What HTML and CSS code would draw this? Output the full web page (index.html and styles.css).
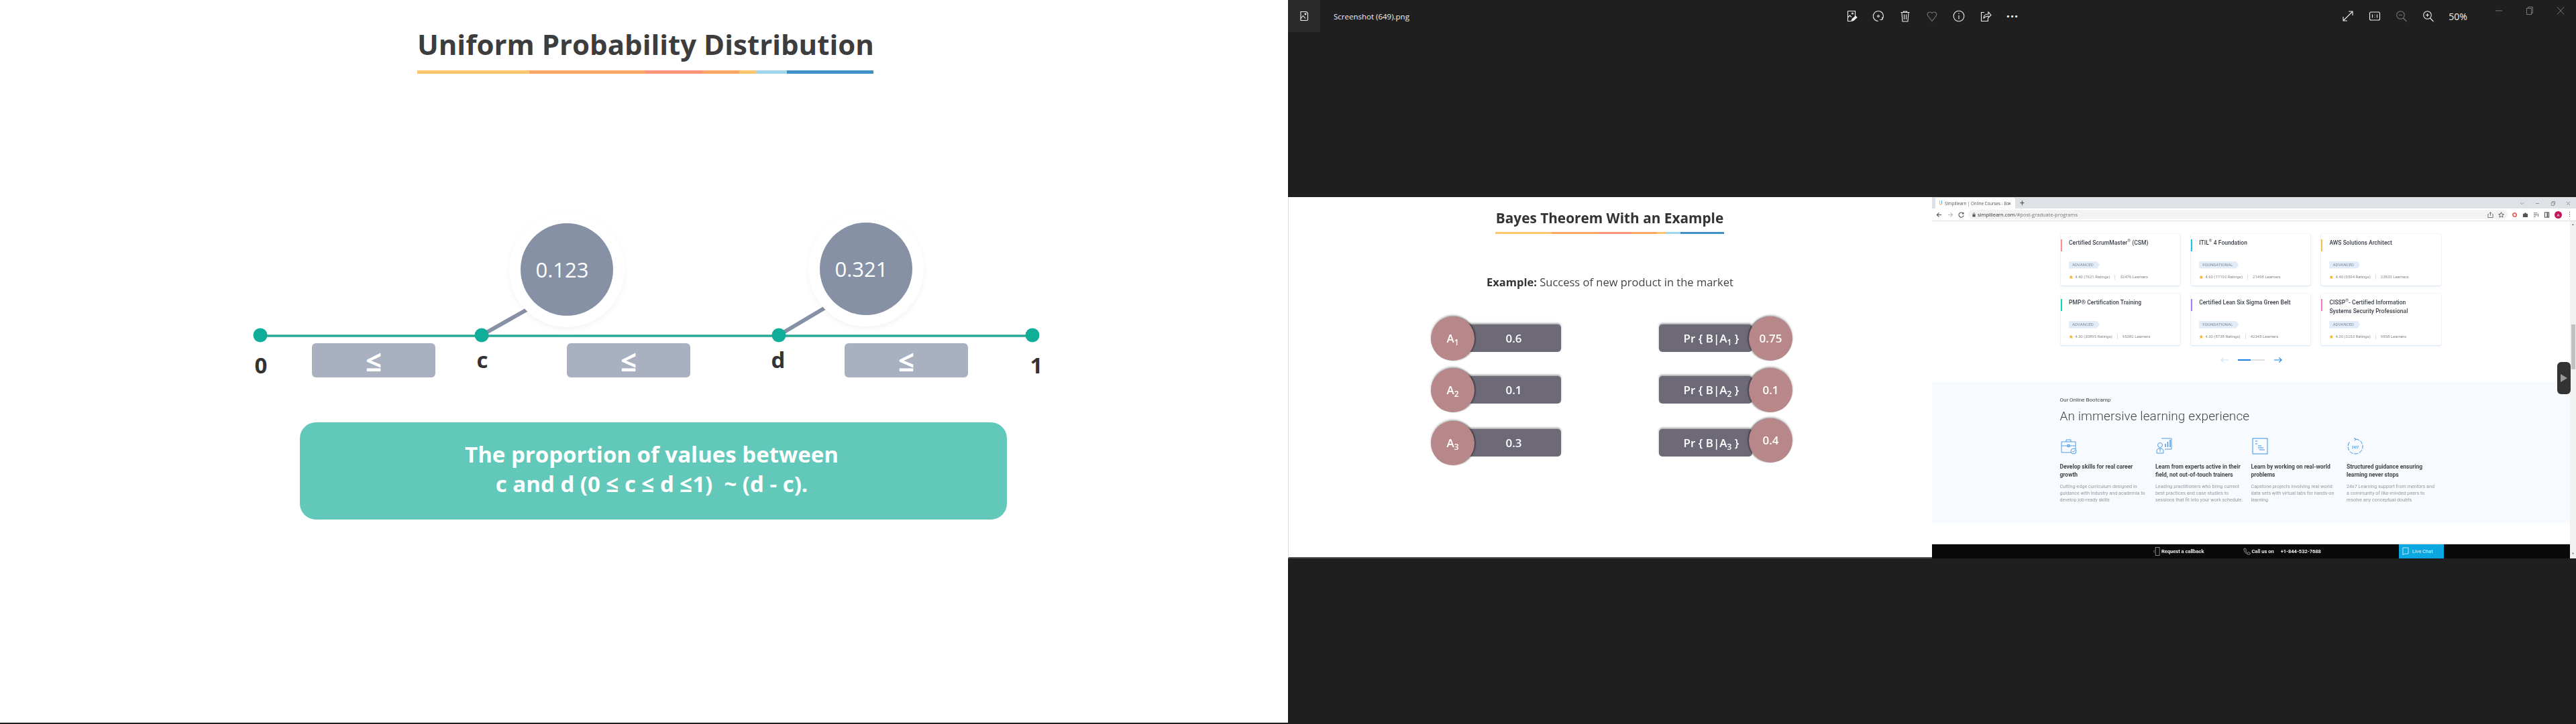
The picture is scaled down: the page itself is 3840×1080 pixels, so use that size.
FILE: index.html
```html
<!DOCTYPE html>
<html lang="en">
<head>
<meta charset="utf-8">
<title>Uniform Probability Distribution</title>
<link rel="stylesheet" href="styles.css">
</head>
<body>
<main class="desktop">
  <section class="main-slide">
    <div class="title-block">
      <h1 class="main-title">Uniform Probability Distribution</h1>
      <div class="rule rule-large"><i class="c1 w1"></i><i class="c2 w2"></i><i class="c3 w3"></i><i class="c2 w4"></i><i class="c1 w5"></i><i class="c4 w6"></i><i class="c5 w7"></i></div>
    </div>
    <div class="diagram">
      <svg class="diagram-art" viewBox="0 0 1920 520" width="1920" height="520" aria-hidden="true">
        <line x1="388" y1="391" x2="1539" y2="391" stroke="#2aa898" stroke-width="3.5"/>
        <line x1="718" y1="390" x2="787" y2="351" stroke="#8791a6" stroke-width="6"/>
        <line x1="1161" y1="390" x2="1230" y2="349" stroke="#8791a6" stroke-width="6"/>
        <circle cx="388" cy="390" r="10.5" fill="#10ae98"/>
        <circle cx="718" cy="390" r="10.5" fill="#10ae98"/>
        <circle cx="1161" cy="390" r="10.5" fill="#10ae98"/>
        <circle cx="1539" cy="390" r="10.5" fill="#10ae98"/>
      </svg>
      <div class="bubble bubble-c"><span>0.123</span></div>
      <div class="bubble bubble-d"><span>0.321</span></div>
      <div class="le-box box-a">≤</div>
      <div class="le-box box-b">≤</div>
      <div class="le-box box-c">≤</div>
      <span class="tick tick-0">0</span>
      <span class="tick tick-c">c</span>
      <span class="tick tick-d">d</span>
      <span class="tick tick-1">1</span>
    </div>
    <div class="proportion">The proportion of values between<br>c and d (0 ≤ c ≤ d ≤1)&nbsp; ~ (d - c).</div>
  </section>

  <section class="viewer">
    <header class="viewer-bar">
      <div class="viewer-tab">
        <svg viewBox="0 0 18 18" width="18" height="18" fill="none" stroke="#f0f0f0" stroke-width="1.1"><path d="M4 2.5h8.500l2 2v9.500a1.500 1.500 0 0 1-1.500 1.500H4z"/><path d="M4 12.500l3.500-4 3.500 4M4 15.500h9"/><circle cx="11" cy="6" r=".9"/></svg>
      </div>
      <span class="file-name">Screenshot (649).png</span>
      <div class="tool-group tools-main">
        <span class="tool"><svg viewBox="0 0 18 18" width="18" height="18" fill="none" stroke="#eee" stroke-width="1.100"><path d="M3.500 1.500h11v8M3.500 1.500v15h5"/><path d="M3.500 11l3-3 2.500 2.500"/><circle cx="10.500" cy="5" r="1"/><path d="M9 16.500l1-3 5-4.500 2 2-5 4.500z" fill="#eee"/></svg></span>
        <span class="tool"><svg viewBox="0 0 18 18" width="18" height="18" fill="none" stroke="#eee" stroke-width="1.100"><path d="M9 16.500A7.500 7.500 0 1 1 14.500 14M14.800 10.500v4h-3.500"/><circle cx="9" cy="9" r="1.300"/></svg></span>
        <span class="tool"><svg viewBox="0 0 18 18" width="18" height="18" fill="none" stroke="#eee" stroke-width="1.100"><path d="M2.500 3.500h13M6.500 3.500V2h5v1.500M4 3.500l1 13.500h8l1-13.500M7.500 6.500V14M10.500 6.500V14"/></svg></span>
        <span class="tool tool-dim"><svg viewBox="0 0 18 18" width="18" height="18" fill="none" stroke="#777" stroke-width="1.100"><path d="M9 16.500L2.800 8.500C.8 5 4.800 .8 9 4.500c4.200-3.700 8.200.5 6.200 4z"/></svg></span>
        <span class="tool"><svg viewBox="0 0 18 18" width="18" height="18" fill="none" stroke="#eee" stroke-width="1.100"><circle cx="9" cy="9" r="7.800"/><path d="M9 8v5.500M9 4.500v1.500"/></svg></span>
        <span class="tool"><svg viewBox="0 0 18 18" width="18" height="18" fill="none" stroke="#eee" stroke-width="1.100"><path d="M7 3.500H2.500v13h10V12"/><path d="M6 12c0-4 3-6 7-6V3l4 4.500-4 4V9c-3 0-5 1-7 3z"/></svg></span>
        <span class="tool tool-more">···</span>
      </div>
      <div class="tool-group tools-zoom">
        <span class="tool"><svg viewBox="0 0 18 18" width="18" height="18" fill="none" stroke="#eee" stroke-width="1.100"><path d="M2 16L16 2M10 2h6v6M2 10v6h6"/></svg></span>
        <span class="tool"><svg viewBox="0 0 18 18" width="18" height="18" fill="none" stroke="#eee" stroke-width="1.100"><rect x="1.500" y="3" width="15" height="12" rx="2"/><path d="M5.500 6.500v5M12.500 6.500v5M9 7v.8M9 10.200v.8"/></svg></span>
        <span class="tool"><svg viewBox="0 0 18 18" width="18" height="18" fill="none" stroke="#777" stroke-width="1.100"><circle cx="7.500" cy="7.500" r="5.800"/><path d="M5 7.500h5M11.500 12l5 5"/></svg></span>
        <span class="tool"><svg viewBox="0 0 18 18" width="18" height="18" fill="none" stroke="#eee" stroke-width="1.100"><circle cx="7.500" cy="7.500" r="5.800"/><path d="M5 7.500h5M7.500 5v5M11.500 12l5 5"/></svg></span>
      </div>
      <span class="zoom-level">50%</span>
      <div class="win-controls">
        <span class="win-btn"><svg viewBox="0 0 12 12" width="12" height="12" stroke="#777" fill="none"><path d="M1 6h10"/></svg></span>
        <span class="win-btn"><svg viewBox="0 0 12 12" width="12" height="12" stroke="#777" fill="none"><rect x="1.500" y="2.500" width="7" height="9"/><path d="M3.500 2.500V.5h7v9h-2"/></svg></span>
        <span class="win-btn"><svg viewBox="0 0 12 12" width="12" height="12" stroke="#777" fill="none"><path d="M1 .5l10 11M11 .5L1 11.500"/></svg></span>
      </div>
    </header>

    <div class="slides">
      <article class="bayes">
        <div class="bayes-head">
          <h2 class="bayes-title">Bayes Theorem With an Example</h2>
          <div class="rule rule-small"><i class="c1 s1"></i><i class="c2 s2"></i><i class="c3 s3"></i><i class="c2 s4"></i><i class="c1 s5"></i><i class="c4 s6"></i><i class="c5 s7"></i></div>
        </div>
        <p class="bayes-example"><b>Example:</b> Success of new product in the market</p>
        <div class="bayes-grid">
          <div class="bayes-col col-left">
            <div class="b-row"><span class="b-dot"><span>A<sub>1</sub></span></span><span class="b-bar">0.6</span></div>
            <div class="b-row"><span class="b-dot"><span>A<sub>2</sub></span></span><span class="b-bar">0.1</span></div>
            <div class="b-row row-lower"><span class="b-dot"><span>A<sub>3</sub></span></span><span class="b-bar">0.3</span></div>
          </div>
          <div class="bayes-col col-right">
            <div class="b-row"><span class="b-bar"><span>Pr { B|A<sub>1</sub> }</span></span><span class="b-dot">0.75</span></div>
            <div class="b-row"><span class="b-bar"><span>Pr { B|A<sub>2</sub> }</span></span><span class="b-dot">0.1</span></div>
            <div class="b-row row-raised"><span class="b-bar"><span>Pr { B|A<sub>3</sub> }</span></span><span class="b-dot dot-high">0.4</span></div>
          </div>
        </div>
      </article>

      <article class="browser">
        <div class="tab-strip">
          <div class="b-tab">
            <svg viewBox="0 0 8 12" width="6" height="10" fill="none" stroke-width="1.300"><path d="M2 1v6" stroke="#f5b642"/><path d="M6 1v6" stroke="#3fb0e8"/><path d="M2 7c0 3 4 3 4 0" stroke="#f08c3c"/></svg>
            <span class="b-tab-text">Simplilearn | Online Courses - Bo</span>
            <span class="b-tab-x">✕</span>
          </div>
          <span class="b-plus">+</span>
          <div class="b-win">
            <svg viewBox="0 0 8 8" width="7" height="7" fill="none" stroke="#888"><path d="M1 2.500l3 3 3-3"/></svg>
            <svg viewBox="0 0 8 8" width="7" height="7" fill="none" stroke="#888"><path d="M1 4h6"/></svg>
            <svg viewBox="0 0 8 8" width="7" height="7" fill="none" stroke="#888"><path d="M1.500 2.500h4.500v5h-4.500zM3 2.500v-2h4.500v5h-1.500"/></svg>
            <svg viewBox="0 0 8 8" width="7" height="7" fill="none" stroke="#888"><path d="M1 1l6 6M7 1L1 7"/></svg>
          </div>
        </div>
        <div class="url-row">
          <div class="nav-btns">
            <svg viewBox="0 0 10 10" width="9" height="9" fill="none" stroke="#555" stroke-width="1.200"><path d="M9 5H1.500M5 1.500L1.500 5 5 8.500"/></svg>
            <svg viewBox="0 0 10 10" width="9" height="9" fill="none" stroke="#bbb" stroke-width="1.200"><path d="M1 5h7.500M5 1.500L8.500 5 5 8.500"/></svg>
            <svg viewBox="0 0 10 10" width="9" height="9" fill="none" stroke="#555" stroke-width="1.200"><path d="M8.500 3A4 4 0 1 0 9 6M8.800 .8V3.300H6.300"/></svg>
          </div>
          <div class="url-bar">
            <svg class="url-lock" viewBox="0 0 6 8" width="5" height="7" fill="#555"><rect x=".5" y="3" width="5" height="4.500"/><path d="M1.500 3V2a1.500 1.500 0 0 1 3 0v1" fill="none" stroke="#555" stroke-width=".8"/></svg>
            <span class="url-text"><b>simplilearn.com</b>/#post-graduate-programs</span>
            <svg class="url-share" viewBox="0 0 10 10" width="9" height="9" fill="none" stroke="#666"><path d="M2 4H1v5.500h8V4H8M5 6.500V.8M3 2.500L5 .8l2 1.700"/></svg>
            <svg class="url-star" viewBox="0 0 10 10" width="9" height="9" fill="none" stroke="#555"><path d="M5 .8l1.300 2.900 3.100.3-2.400 2 .8 3L5 7.400 2.200 9l.8-3-2.400-2 3.100-.3z"/></svg>
          </div>
          <div class="ext-icons">
            <svg viewBox="0 0 10 10" width="9" height="9" fill="none" stroke="#e8594f" stroke-width="1.800"><circle cx="5" cy="5" r="3"/></svg>
            <svg viewBox="0 0 10 10" width="9" height="9" fill="#555"><path d="M1 3h2.500a1.500 1.500 0 0 1 3 0H9v6H1z"/></svg>
            <svg viewBox="0 0 10 10" width="9" height="9" fill="none" stroke="#555"><path d="M1 2h6M1 5h6M1 8h3M8.500 3v5"/></svg>
            <svg viewBox="0 0 10 10" width="9" height="9" fill="none" stroke="#555" stroke-width="1.200"><rect x="1.500" y="1" width="7" height="8"/><path d="M6 1v8" stroke-width="2"/></svg>
            <span class="avatar">A</span>
            <span class="kebab">⋮</span>
          </div>
        </div>
        <div class="page">
          <div class="page-content">
            <div class="cards">
              <div class="card"><span class="accent a-red"></span><h3>Certified ScrumMaster<sup>®</sup> (CSM)</h3><div class="card-low"><span class="tag">ADVANCED</span><p class="meta"><svg class="star" viewBox="0 0 10 10"><path d="M5 .5l1.400 3 3.200.3-2.400 2.100.8 3.300L5 7.500 2 9.200l.8-3.300L.4 3.800l3.200-.3z"/></svg>4.40 (7621 Ratings)<span class="sep"></span>32476 Learners</p></div></div>
              <div class="card"><span class="accent a-cyan"></span><h3>ITIL<sup>®</sup> 4 Foundation</h3><div class="card-low"><span class="tag">FOUNDATIONAL</span><p class="meta"><svg class="star" viewBox="0 0 10 10"><path d="M5 .5l1.400 3 3.200.3-2.400 2.100.8 3.300L5 7.500 2 9.200l.8-3.300L.4 3.800l3.200-.3z"/></svg>4.60 (17192 Ratings)<span class="sep"></span>21498 Learners</p></div></div>
              <div class="card"><span class="accent a-amber"></span><h3>AWS Solutions Architect</h3><div class="card-low"><span class="tag">ADVANCED</span><p class="meta"><svg class="star" viewBox="0 0 10 10"><path d="M5 .5l1.400 3 3.200.3-2.400 2.100.8 3.300L5 7.500 2 9.200l.8-3.300L.4 3.800l3.200-.3z"/></svg>4.40 (5594 Ratings)<span class="sep"></span>23833 Learners</p></div></div>
              <div class="card"><span class="accent a-teal"></span><h3>PMP® Certification Training</h3><div class="card-low"><span class="tag">ADVANCED</span><p class="meta"><svg class="star" viewBox="0 0 10 10"><path d="M5 .5l1.400 3 3.200.3-2.400 2.100.8 3.300L5 7.500 2 9.200l.8-3.300L.4 3.800l3.200-.3z"/></svg>4.30 (30895 Ratings)<span class="sep"></span>95382 Learners</p></div></div>
              <div class="card"><span class="accent a-violet"></span><h3>Certified Lean Six Sigma Green Belt</h3><div class="card-low"><span class="tag">FOUNDATIONAL</span><p class="meta"><svg class="star" viewBox="0 0 10 10"><path d="M5 .5l1.400 3 3.200.3-2.400 2.100.8 3.300L5 7.500 2 9.200l.8-3.300L.4 3.800l3.200-.3z"/></svg>4.30 (8738 Ratings)<span class="sep"></span>42345 Learners</p></div></div>
              <div class="card"><span class="accent a-pink"></span><h3>CISSP<sup>®</sup>- Certified Information<br>Systems Security Professional</h3><div class="card-low"><span class="tag">ADVANCED</span><p class="meta"><svg class="star" viewBox="0 0 10 10"><path d="M5 .5l1.400 3 3.200.3-2.400 2.100.8 3.300L5 7.500 2 9.200l.8-3.300L.4 3.800l3.200-.3z"/></svg>4.30 (3253 Ratings)<span class="sep"></span>9858 Learners</p></div></div>
            </div>
            <div class="pager">
              <svg viewBox="0 0 14 10" width="13" height="10" fill="none" stroke="#cfe0f2" stroke-width="1.200"><path d="M13 5H1.500M5 1L1 5l4 4"/></svg>
              <span class="pager-track"><i></i></span>
              <svg viewBox="0 0 14 10" width="13" height="10" fill="none" stroke="#1c7fe6" stroke-width="1.200"><path d="M1 5h11.500M9 1l4 4-4 4"/></svg>
            </div>
            <div class="bootcamp">
              <p class="eyebrow">Our Online Bootcamp</p>
              <h3 class="boot-title">An immersive learning experience</h3>
              <div class="features">
                <div class="feature">
                  <svg class="f-icon" viewBox="0 0 24 25" width="24" height="25" fill="none" stroke="#3d93e4" stroke-width=".9"><path d="M1 6h21v16H1zM1 12h21M8 6V3h7v3"/><rect x="10" y="10.500" width="3" height="3"/><circle cx="19" cy="20" r="4" fill="#f7faff"/><path d="M17 20l1.500 1.500 2.500-3"/></svg>
                  <h4>Develop skills for real career growth</h4>
                  <p>Cutting-edge curriculum designed in guidance with industry and academia to develop job-ready skills</p>
                </div>
                <div class="feature">
                  <svg class="f-icon" viewBox="0 0 24 25" width="24" height="25" fill="none" stroke="#3d93e4" stroke-width=".9"><path d="M8 1h15v16H13"/><path d="M14 14V9M17.500 14V6M21 14V3" stroke-width="1.400"/><circle cx="6" cy="11" r="3.500"/><path d="M1 23v-3c0-3 2-4 5-4s5 1 5 4v3z"/><path d="M6 16v5"/></svg>
                  <h4>Learn from experts active in their field, not out-of-touch trainers</h4>
                  <p>Leading practitioners who bring current best practices and case studies to sessions that fit into your work schedule.</p>
                </div>
                <div class="feature">
                  <svg class="f-icon" viewBox="0 0 24 25" width="24" height="25" fill="none" stroke="#3d93e4" stroke-width="1"><rect x="1" y="1" width="22" height="23"/><path d="M5 5h3M5 9h3M9 12h5M9 15h8M11 18h8"/></svg>
                  <h4>Learn by working on real-world problems</h4>
                  <p>Capstone projects involving real world data sets with virtual labs for hands-on learning</p>
                </div>
                <div class="feature">
                  <svg class="f-icon" viewBox="0 0 24 25" width="24" height="25" fill="none" stroke="#3d93e4" stroke-width="1"><path d="M12 2a11 11 0 1 1-8 3.500" stroke-dasharray="6 1.500"/><path d="M10 .5l3 1.500-2 2.500"/><text x="12" y="15.500" text-anchor="middle" class="clock-text">24/7</text></svg>
                  <h4>Structured guidance ensuring learning never stops</h4>
                  <p>24x7 Learning support from mentors and a community of like-minded peers to resolve any conceptual doubts</p>
                </div>
              </div>
            </div>
            <div class="page-gap"></div>
            <footer class="callbar">
              <span class="call-item call-request">
                <svg viewBox="0 0 11 14" width="10" height="13" fill="none" stroke="#ccc" stroke-width=".7"><rect x="3.500" y=".5" width="6.500" height="13"/><path d="M2 5L.5 7 2 9"/></svg>
                Request a callback
              </span>
              <span class="call-item call-phone">
                <svg viewBox="0 0 12 12" width="11" height="11" fill="none" stroke="#ccc" stroke-width=".8"><path d="M1 2l2-1 2 3-1 1.500c.5 1.500 1.500 2.500 3 3L8.500 7l3 2-1 2C5 11 1 7 1 2z"/></svg>
                Call us on <em>+1-844-532-7688</em>
              </span>
              <span class="live-chat">
                <svg viewBox="0 0 11 14" width="10" height="13" fill="none" stroke="#cdeefb"><path d="M1 1h9v10H3l-2 2z"/></svg>
                Live Chat
              </span>
            </footer>
          </div>
          <div class="scrollbar">
            <span class="sb-arrow">▲</span>
            <span class="sb-thumb"></span>
            <span class="sb-arrow">▼</span>
          </div>
          <div class="side-handle"><span class="play"></span></div>
        </div>
      </article>
    </div>
  </section>
</main>
</body>
</html>
```

FILE: styles.css
```css
* { box-sizing: border-box; }
html, body { margin: 0; padding: 0; }
body { width: 3840px; height: 1080px; overflow: hidden; background: #1f1f1f; font-family: "Open Sans", sans-serif; }
h1, h2, h3, h4, p { margin: 0; }
.desktop { display: grid; grid-template-columns: 1920px 1920px; height: 1080px; }

/* Left slide */
.main-slide { background: #fff; height: 1078px; display: flex; flex-direction: column; }
.title-block { width: 680px; margin-left: 622px; padding-top: 37px; }
.main-title { font-size: 42px; line-height: 57px; font-weight: 700; color: #3d3d3d; white-space: nowrap; text-align: center; }
.rule { display: flex; }
.rule i { display: block; height: 100%; }
.rule-large { height: 5px; margin-top: 11px; }
.c1 { background: #ffc56e; } .c2 { background: #ffa566; } .c3 { background: #ff9478; } .c4 { background: #9ed8ee; } .c5 { background: #4090c8; }
.w1 { width: 167px; } .w2 { width: 173px; } .w3 { width: 85px; } .w4 { width: 55px; } .w5 { width: 26px; } .w6 { width: 45px; } .w7 { width: 129px; }

.diagram { position: relative; height: 520px; width: 1920px; }
.diagram-art { position: absolute; left: 0; top: 0; }
.bubble { position: absolute; width: 138px; height: 138px; border-radius: 50%; background: #8791a6; color: #fff; font-size: 31px; font-weight: 400;
  display: flex; align-items: center; justify-content: center; box-shadow: 0 0 0 17px #fff, 0 3px 8px 17px rgba(0,0,0,.05); }
.bubble span { margin-right: 14px; }
.bubble-c { left: 776px; top: 223px; }
.bubble-d { left: 1222px; top: 222px; }
.le-box { position: absolute; top: 402px; width: 184px; height: 51px; border-radius: 6px; background: #a9b1c1; color: #fff; font-size: 42px; font-weight: 700; line-height: 51px; text-align: center; }
.box-a { left: 465px; } .box-b { left: 845px; } .box-c { left: 1259px; }
.tick { position: absolute; font-size: 33px; line-height: 40px; font-weight: 700; color: #333; width: 40px; text-align: center; }
.tick-0 { left: 369px; top: 415px; } .tick-c { left: 699px; top: 407px; } .tick-d { left: 1140px; top: 407px; } .tick-1 { left: 1525px; top: 415px; }
.proportion { width: 1054px; height: 145px; margin-left: 447px; border-radius: 24px; background: #62c8b9; color: #fff; font-size: 33px; line-height: 44px; font-weight: 700; text-align: center; padding: 26px 5px 0 0; }

/* Viewer */
.viewer { height: 1080px; display: flex; flex-direction: column; background: #1f1f1f; }
.viewer-bar { height: 48px; display: flex; align-items: center; color: #f0f0f0; }
.viewer-tab { width: 48px; height: 48px; background: #2b2b2b; display: flex; align-items: center; justify-content: center; }
.file-name { width: 772px; padding-left: 20px; font-size: 11.500px; font-family: "Open Sans", sans-serif; white-space: nowrap; }
.tool-group { display: flex; }
.tool { width: 40px; height: 48px; display: flex; align-items: center; justify-content: center; }
.tool-more { font-size: 18px; font-weight: 700; letter-spacing: 1px; }
.tools-zoom { margin-left: 460px; }
.zoom-level { width: 48px; text-align: center; font-size: 14px; }
.win-controls { display: flex; margin-left: 14px; align-self: flex-start; }
.win-btn { width: 46px; height: 32px; display: flex; align-items: center; justify-content: center; }

.slides { margin-top: 246px; height: 539px; display: grid; grid-template-columns: 960px 960px; filter: blur(.3px); }

/* Bayes slide */
.bayes { background: #fff; border-bottom: 2px solid #555; border-left: 1px solid #ddd; }
.bayes-head { width: 341px; margin-left: 308px; padding-top: 17px; }
.bayes-title { font-size: 20.800px; line-height: 28px; font-weight: 700; color: #333; white-space: nowrap; text-align: center; }
.rule-small { height: 3px; margin-top: 7px; }
.s1 { width: 84px; } .s2 { width: 70px; } .s3 { width: 48px; } .s4 { width: 39px; } .s5 { width: 13px; } .s6 { width: 22px; } .s7 { width: 65px; }
.bayes-example { margin-top: 59px; text-align: center; font-size: 16.500px; line-height: 26px; color: #444; margin-left: 0; width: 958px; }
.bayes-example b { color: #333; }
.bayes-grid { display: flex; margin-top: 38px; padding-left: 212px; gap: 146px; }
.bayes-col { display: flex; flex-direction: column; gap: 11.500px; width: 194px; }
.b-row { display: flex; align-items: center; height: 65.500px; color: #fff; font-weight: 600; font-size: 17px; }
.row-lower { margin-top: 2px; }
.b-dot { width: 65px; height: 65.500px; border-radius: 50%; background: #b78789; flex: none; display: flex; align-items: center; justify-content: center; position: relative; z-index: 1; box-shadow: 0 -2px 3px rgba(0,0,0,.28); }
.col-left .b-dot { box-shadow: 0 -2px 3px rgba(0,0,0,.28), 2px 0 2px rgba(0,0,0,.3); }
.col-right .b-dot { box-shadow: 0 -2px 3px rgba(0,0,0,.28), -2px 0 2px rgba(0,0,0,.3); }
.b-bar { height: 41px; background: #6d6976; flex: 1; display: flex; align-items: center; justify-content: center; border-radius: 5px; box-shadow: 0 -2px 3px rgba(0,0,0,.35); white-space: nowrap; }
.b-dot sub, .b-bar sub { font-size: 12px; line-height: 0; vertical-align: -4px; }
.col-left .b-bar { margin-left: -28px; padding-left: 16px; }
.col-right .b-bar { margin-right: -5px; padding: 0 5px 0 22px; }
.col-right .b-row { width: 199px; }
.row-raised .dot-high { transform: translateY(-2px); }
.row-raised .b-bar { transform: translateY(2px); }

/* Browser shot */
.browser { display: flex; flex-direction: column; background: #fff; font-family: Roboto, sans-serif; overflow: hidden; }
.tab-strip { height: 17px; background: #dee1e6; display: flex; align-items: flex-end; }
.b-tab { width: 119px; height: 16px; margin-left: 5px; background: #fff; border-radius: 4px 4px 0 0; display: flex; align-items: center; padding-left: 5px; gap: 3px; }
.b-tab-text { width: 91px; font-size: 6.200px; color: #555; white-space: nowrap; font-family: "Open Sans", sans-serif; }
.b-tab-x { font-size: 6px; color: #444; }
.b-plus { font-size: 12px; color: #555; margin-left: 7px; line-height: 16px; height: 16px; }
.b-win { margin-left: auto; display: flex; gap: 16px; height: 16px; padding-right: 8px; align-items: center; }
.url-row { height: 19px; display: flex; align-items: center; border-bottom: 1px solid #dcdcdc; }
.nav-btns { display: flex; gap: 7.500px; width: 54px; padding-left: 6px; flex: none; }
.url-bar { width: 804px; height: 14px; background: #f1f3f4; border-radius: 7px; display: flex; align-items: center; padding-left: 6px; }
.url-lock { flex: none; }
.url-text { font-size: 7.500px; color: #777; margin-left: 3px; font-family: "Open Sans", sans-serif; white-space: nowrap; }
.url-text b { font-weight: 400; color: #333; }
.url-share { margin-left: auto; margin-right: 7px; }
.url-star { margin-right: 5px; }
.ext-icons { display: flex; align-items: center; gap: 7px; padding-left: 6px; }
.avatar { width: 11px; height: 11px; border-radius: 50%; background: #c2185b; color: #fff; font-size: 6px; text-align: center; line-height: 11px; }
.kebab { font-size: 9px; color: #444; line-height: 1; }

.page { flex: 1; min-height: 0; display: flex; position: relative; }
.page-content { width: 951px; display: flex; flex-direction: column; }
.cards { display: grid; grid-template-columns: repeat(3, 178.700px); grid-auto-rows: 77px; column-gap: 15.500px; row-gap: 12.300px; margin: 19px 0 0 191.500px; }
.card { position: relative; background: #fff; border-radius: 2px; box-shadow: 0 0 2px rgba(120,170,230,.35), 0 1px 2px rgba(120,170,230,.25); padding: 7px 8px 0 12.500px; display: flex; flex-direction: column; }
.accent { position: absolute; left: 0; top: 8px; width: 2.500px; height: 18px; }
.a-red { background: #ff8f8f; } .a-cyan { background: #14c8e6; } .a-amber { background: #f4c04e; } .a-teal { background: #10d8bc; } .a-violet { background: #a97ff0; } .a-pink { background: #ec7ccc; }
.card h3 { font-size: 8.500px; line-height: 13px; font-weight: 500; color: #3a3f4a; height: 26px; letter-spacing: .04px; white-space: nowrap; }
.card h3 sup { font-size: 6px; line-height: 0; font-weight: 400; }
.card-low { margin-top: 7.500px; }
.tag { display: block; width: fit-content; height: 11px; background: #e2ecf8; color: #7f8b9c; font-size: 6.200px; line-height: 11px; padding: 0 9px 0 5px; clip-path: polygon(0 0, calc(100% - 4px) 0, 100% 50%, calc(100% - 4px) 100%, 0 100%); }
.meta { display: flex; align-items: center; font-size: 6px; line-height: 8px; color: #888; margin-top: 8.500px; white-space: nowrap; }
.star { width: 6.500px; height: 6.500px; fill: #f7b334; margin-right: 2.500px; }
.sep { display: block; width: 1px; height: 7px; background: #ddd; margin: 0 7px; }
.pager { display: flex; align-items: center; margin: 14.500px 0 0 430px; height: 14px; }
.pager-track { display: block; width: 40px; height: 2.500px; background: #dfdfdf; margin: 0 13px; }
.pager-track i { display: block; width: 19px; height: 100%; background: #1c7fe6; }
.bootcamp { height: 211px; margin-top: 25.500px; background: #f7faff; padding: 23px 0 0 190.500px; }
.eyebrow { font-size: 8px; line-height: 10px; color: #444; }
.boot-title { font-size: 19px; line-height: 26px; font-weight: 300; color: #444; margin-top: 6px; letter-spacing: .1px; }
.features { display: grid; grid-template-columns: repeat(4, 142.500px); margin-top: 19px; }
.feature { padding-right: 8px; }
.f-icon { display: block; margin-left: 1px; }
.feature h4 { font-size: 8.500px; line-height: 12px; font-weight: 700; color: #444; margin-top: 12px; height: 24px; }
.feature p { font-size: 7.200px; line-height: 10px; color: #999; margin-top: 6.500px; }
.clock-text { font-size: 5px; font-weight: 700; fill: #3d93e4; stroke: none; }
.page-gap { height: 31px; }
.callbar { height: 21.500px; background: #0a0a0a; border-top: 1px solid #ddd; display: flex; align-items: center; color: #eee; font-size: 7.500px; font-weight: 700; position: relative; padding-left: 330px; }
.call-item { display: inline-flex; align-items: center; gap: 2px; white-space: nowrap; }
.call-phone { margin-left: 58px; }
.call-phone em { font-style: normal; margin-left: 8px; }
.live-chat { position: absolute; left: 696px; top: 0; width: 66.500px; height: 21px; background: #0aa7e0; color: #dff4fc; font-weight: 400; display: flex; align-items: center; gap: 5px; padding-left: 5px; }

.scrollbar { width: 9px; display: flex; flex-direction: column; background: #f1f1f1; align-items: center; justify-content: flex-start; }
.sb-arrow { font-size: 4px; color: #555; height: 6px; line-height: 6px; margin-top: 2px; }
.sb-thumb { width: 6px; height: 67px; background: #c1c1c1; margin-top: 146px; margin-bottom: 270px; }
.side-handle { position: absolute; left: 932px; top: 210px; width: 20px; height: 48px; background: #333; border-radius: 6px; display: flex; align-items: center; justify-content: center; }
.play { width: 0; height: 0; border-left: 10px solid #999; border-top: 6px solid transparent; border-bottom: 6px solid transparent; }
```
